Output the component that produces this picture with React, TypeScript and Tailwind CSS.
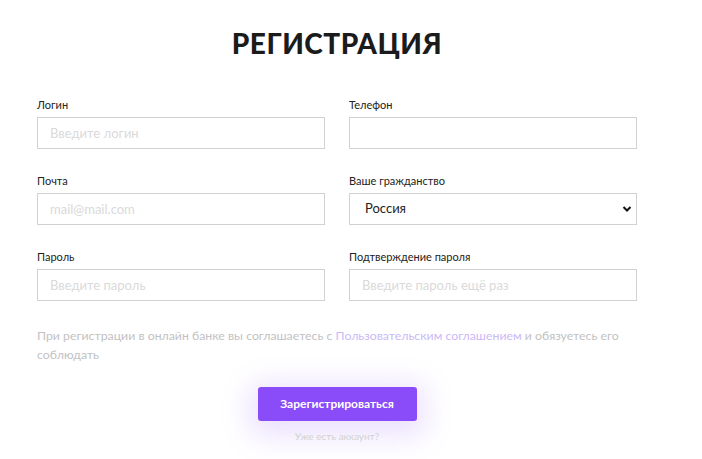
const font = { fontFamily: '"Lato", "Noto Sans", sans-serif' };

function Field({ label, placeholder }: { label: string; placeholder: string }) {
  return (
    <div className="flex flex-col">
      <label className="text-[11px] leading-[14px] text-[#222] mb-[5px] h-[14px]">{label}</label>
      <input
        placeholder={placeholder}
        className="h-[32px] w-full border border-[#d1d1d1] px-3 text-[13px] text-[#333] placeholder:text-[#dadada] outline-none"
      />
    </div>
  );
}

export default function App() {
  return (
    <div className="min-h-[459px] bg-white" style={font}>
      <div className="ml-[37px] w-[600px] pt-[27px]">
        <h1 className="text-center text-[28px] leading-[32px] font-black tracking-[0.5px] text-[#1b1b1b]">
          РЕГИСТРАЦИЯ
        </h1>

        <div className="mt-[39px] grid grid-cols-2 gap-x-[24px] gap-y-[25px]">
          <Field label="Логин" placeholder="Введите логин" />
          <Field label="Телефон" placeholder="" />
          <Field label="Почта" placeholder="mail@mail.com" />
          <div className="flex flex-col">
            <label className="text-[11px] leading-[14px] text-[#222] mb-[5px] h-[14px]">Ваше гражданство</label>
            <div className="relative">
              <select className="h-[32px] w-full appearance-none border border-[#d1d1d1] pl-[15px] text-[13px] text-[#222] outline-none bg-white">
                <option>Россия</option>
              </select>
              <svg
                className="pointer-events-none absolute right-[5px] top-[12px]"
                width="10"
                height="8"
                viewBox="0 0 10 8"
              >
                <path d="M1.5 2l3.5 3.5L8.5 2" fill="none" stroke="#111" strokeWidth="2" />
              </svg>
            </div>
          </div>
          <Field label="Пароль" placeholder="Введите пароль" />
          <Field label="Подтверждение пароля" placeholder="Введите пароль ещё раз" />
        </div>

        <p className="mt-[25px] text-[12.3px] leading-[19px] text-[#c2c2c2]">
          При регистрации в онлайн банке вы соглашаетесь с{' '}
          <a className="text-[#cbb9f8]">Пользовательским соглашением</a> и обязуетесь его соблюдать
        </p>

        <div className="mt-[23px] flex flex-col items-center">
          <button className="h-[34px] w-[159px] rounded-[3px] bg-[#8a4cf8] text-[12px] font-bold text-white shadow-[0_6px_30px_8px_rgba(138,76,248,0.18)]">
            Зарегистрироваться
          </button>
          <a className="mt-[9px] text-[10px] leading-[12px] text-[#d2d2d2]">Уже есть аккаунт?</a>
        </div>
      </div>
    </div>
  );
}
